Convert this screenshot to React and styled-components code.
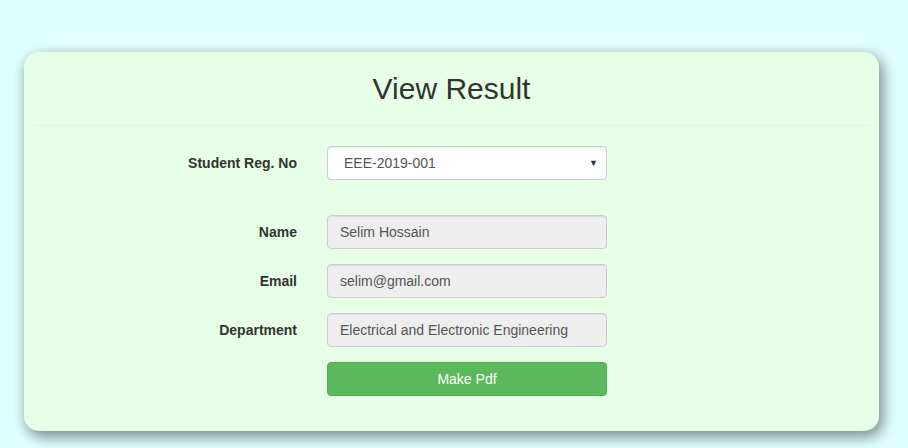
import React from "react";
import styled, { createGlobalStyle } from "styled-components";

const GlobalStyle = createGlobalStyle`
  html, body {
    margin: 0;
    padding: 0;
    background: #e0ffff;
    font-family: "Liberation Sans", Arial, sans-serif;
    font-size: 14px;
    color: #333;
  }
`;

const Page = styled.div`
  padding: 52px 29px 20px 24px;
`;

const Card = styled.div`
  background: #e6ffe6;
  border-radius: 15px;
  box-shadow: 3px 5px 14px 1px rgba(0, 0, 0, 0.45);
  padding: 0 10px 35px;
`;

const Title = styled.h2`
  margin: 0;
  padding-top: 20px;
  font-size: 30px;
  font-weight: 500;
  line-height: 1.1;
  text-align: center;
  color: #333;
`;

const Divider = styled.hr`
  margin: 20px 0;
  border: 0;
  border-top: 1px solid #eee;
`;

const Form = styled.form`
  display: flex;
  flex-direction: column;
  gap: 15px;
`;

const Row = styled.div`
  display: flex;
  align-items: center;
  gap: 30px;
  margin-bottom: ${(p) => (p.$spaced ? "20px" : "0")};
`;

const Label = styled.label`
  width: 263px;
  text-align: right;
  font-weight: bold;
  font-size: 14px;
  color: #333;
`;

const Spacer = styled.div`
  width: 263px;
`;

const Field = styled.div`
  box-sizing: border-box;
  width: 280px;
  height: 34px;
  padding: 6px 12px;
  border: 1px solid #ccc;
  border-radius: 4px;
  background: ${(p) => (p.$disabled ? "#eee" : "#fff")};
  color: #555;
  font-size: 14px;
  line-height: 20px;
  display: flex;
  align-items: center;
  justify-content: space-between;
  box-shadow: inset 0 1px 1px rgba(0, 0, 0, 0.075);
`;

const SelectText = styled.span`
  padding-left: 4px;
`;

const Caret = styled.span`
  font-size: 9px;
  color: #333;
  margin-right: -4px;
`;

const Button = styled.button`
  box-sizing: border-box;
  width: 280px;
  height: 34px;
  background: #5cb85c;
  border: 1px solid #4cae4c;
  border-radius: 4px;
  color: #fff;
  font-family: inherit;
  font-size: 14px;
  cursor: pointer;
`;

const fields = [
  { label: "Name", value: "Selim Hossain" },
  { label: "Email", value: "selim@gmail.com" },
  { label: "Department", value: "Electrical and Electronic Engineering" },
];

const App = () => {
  return (
    <Page>
      <GlobalStyle />
      <Card>
        <Title>View Result</Title>
        <Divider />
        <Form onSubmit={(e) => e.preventDefault()}>
          <Row $spaced>
            <Label>Student Reg. No</Label>
            <Field>
              <SelectText>EEE-2019-001</SelectText>
              <Caret>▼</Caret>
            </Field>
          </Row>
          {fields.map((f) => (
            <Row key={f.label}>
              <Label>{f.label}</Label>
              <Field $disabled>{f.value}</Field>
            </Row>
          ))}
          <Row>
            <Spacer />
            <Button type="submit">Make Pdf</Button>
          </Row>
        </Form>
      </Card>
    </Page>
  );
};

export default App;
